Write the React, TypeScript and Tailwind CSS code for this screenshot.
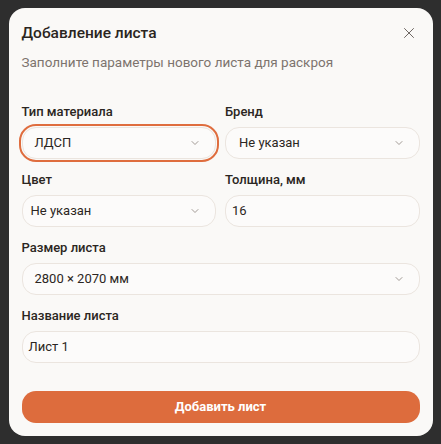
import React from "react";

const Chevron = () => (
  <svg width="12" height="12" viewBox="0 0 24 24" fill="none" stroke="#8a817b" strokeWidth="1.6" strokeLinecap="round" strokeLinejoin="round">
    <path d="m6 9 6 6 6-6" />
  </svg>
);

function SelectBox({ value, focused, pl }: { value: string; focused?: boolean; pl?: string }) {
  return (
    <div
      className={
        "flex h-8 items-center justify-between rounded-[14px] border border-[#ebe5df] bg-[#fcfbfa] pr-[14px] text-[13px] text-[#2b2622] " +
        (pl ?? "pl-[12px]") +
        (focused ? " outline-2 outline-offset-[1px] outline-[#df6d3e]" : "")
      }
    >
      <span>{value}</span>
      <Chevron />
    </div>
  );
}

function InputBox({ value }: { value: string }) {
  return (
    <div className="flex h-8 items-center rounded-[14px] border border-[#ebe5df] bg-[#fcfbfa] px-[6px] text-[13px] text-[#2b2622]">
      {value}
    </div>
  );
}

function Field({ label, children }: { label: string; children: React.ReactNode }) {
  return (
    <div className="flex flex-col gap-[6px]">
      <div className="text-[13px] font-medium leading-[18px] text-[#2b2622]">{label}</div>
      {children}
    </div>
  );
}

export default function App() {
  return (
    <div
      className="flex h-[444px] w-[441px] items-start justify-center bg-[#2e2e2e] pt-[8px]"
      style={{ fontFamily: 'Roboto, "Noto Sans", sans-serif' }}
    >
      <div className="flex h-[428px] w-[424px] flex-col rounded-[16px] bg-[#faf9f7] px-[13px] pt-[14px] pb-[13px]">
        <div className="flex items-center justify-between">
          <div className="text-[15.5px] font-medium leading-[22px] text-[#2a2521]">Добавление листа</div>
          <svg className="mr-[5px]" width="12" height="12" viewBox="0 0 24 24" fill="none" stroke="#6f6864" strokeWidth="2" strokeLinecap="round">
            <path d="M3 3l18 18M21 3 3 21" />
          </svg>
        </div>
        <div className="mt-[8px] text-[13.5px] leading-[20px] text-[#7d746e]">
          Заполните параметры нового листа для раскроя
        </div>
        <div className="mt-[31px] flex flex-col gap-[12px]">
          <div className="grid grid-cols-2 gap-[9px]">
            <Field label="Тип материала">
              <SelectBox value="ЛДСП" focused />
            </Field>
            <Field label="Бренд">
              <SelectBox value="Не указан" pl="pl-[13px]" />
            </Field>
          </div>
          <div className="grid grid-cols-2 gap-[9px]">
            <Field label="Цвет">
              <SelectBox value="Не указан" pl="pl-[8px]" />
            </Field>
            <Field label="Толщина, мм">
              <InputBox value="16" />
            </Field>
          </div>
          <Field label="Размер листа">
            <SelectBox value="2800 × 2070 мм" />
          </Field>
          <Field label="Название листа">
            <InputBox value="Лист 1" />
          </Field>
        </div>
        <button className="mt-auto flex h-8 w-full items-center justify-center rounded-[14px] bg-[#dd6c3d] text-[13px] font-bold text-white">
          Добавить лист
        </button>
      </div>
    </div>
  );
}
